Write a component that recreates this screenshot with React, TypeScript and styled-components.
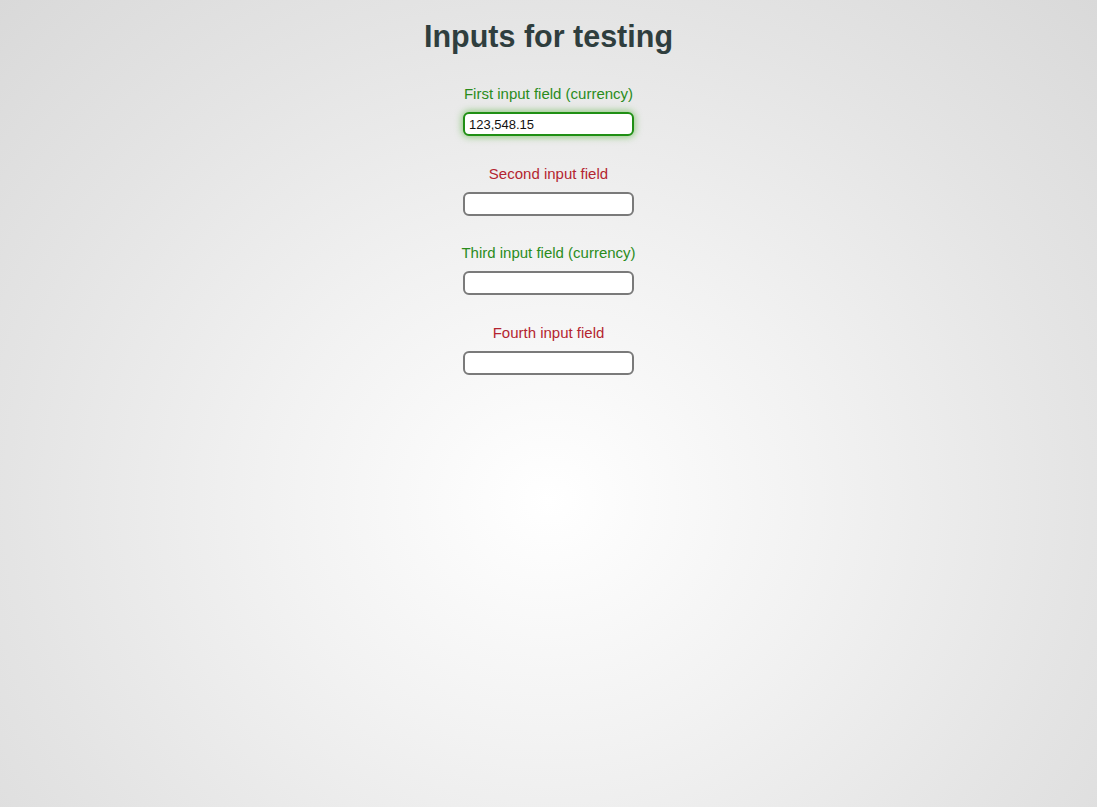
import styled, { createGlobalStyle } from 'styled-components';

const GlobalStyle = createGlobalStyle`
  html, body {
    margin: 0;
    padding: 0;
    height: 100%;
  }
  body {
    font-family: "Liberation Sans", Arial, sans-serif;
    background: radial-gradient(ellipse at 50% 62%, #ffffff 0%, #f2f2f2 35%, #e4e4e4 70%, #d9d9d9 100%);
    min-height: 100vh;
  }
`;

const Page = styled.main`
  display: flex;
  flex-direction: column;
  align-items: center;
  min-height: 100vh;
  padding-top: 19px;
  box-sizing: border-box;
`;

const Title = styled.h1`
  margin: 0 0 31px;
  font-size: 30.5px;
  line-height: 35px;
  font-weight: bold;
  color: #2f3e3e;
`;

const Field = styled.div`
  display: flex;
  flex-direction: column;
  align-items: center;
  margin-bottom: 28.67px;
`;

const Label = styled.label<{ $currency?: boolean }>`
  font-size: 15px;
  line-height: 17px;
  margin-bottom: 10px;
  color: ${(p) => (p.$currency ? '#2a8c1c' : '#b42530')};
`;

const Input = styled.input<{ $active?: boolean }>`
  box-sizing: border-box;
  width: 171px;
  height: 24px;
  padding: 0 4px;
  border: 2px solid ${(p) => (p.$active ? '#1f8f14' : '#7a7a7a')};
  border-radius: 6px;
  background: #fff;
  font-family: "Liberation Sans", Arial, sans-serif;
  font-size: 13px;
  color: #111;
  outline: none;
  box-shadow: ${(p) => (p.$active ? '0 0 7px 1px rgba(60, 170, 30, 0.55)' : 'none')};
`;

const fields = [
  { label: 'First input field (currency)', currency: true, value: '123,548.15' },
  { label: 'Second input field', currency: false, value: '' },
  { label: 'Third input field (currency)', currency: true, value: '' },
  { label: 'Fourth input field', currency: false, value: '' },
];

export default function App() {
  return (
    <>
      <GlobalStyle />
      <Page>
        <Title>Inputs for testing</Title>
        {fields.map((f, i) => (
          <Field key={f.label}>
            <Label $currency={f.currency}>{f.label}</Label>
            <Input $active={i === 0} defaultValue={f.value} />
          </Field>
        ))}
      </Page>
    </>
  );
}
